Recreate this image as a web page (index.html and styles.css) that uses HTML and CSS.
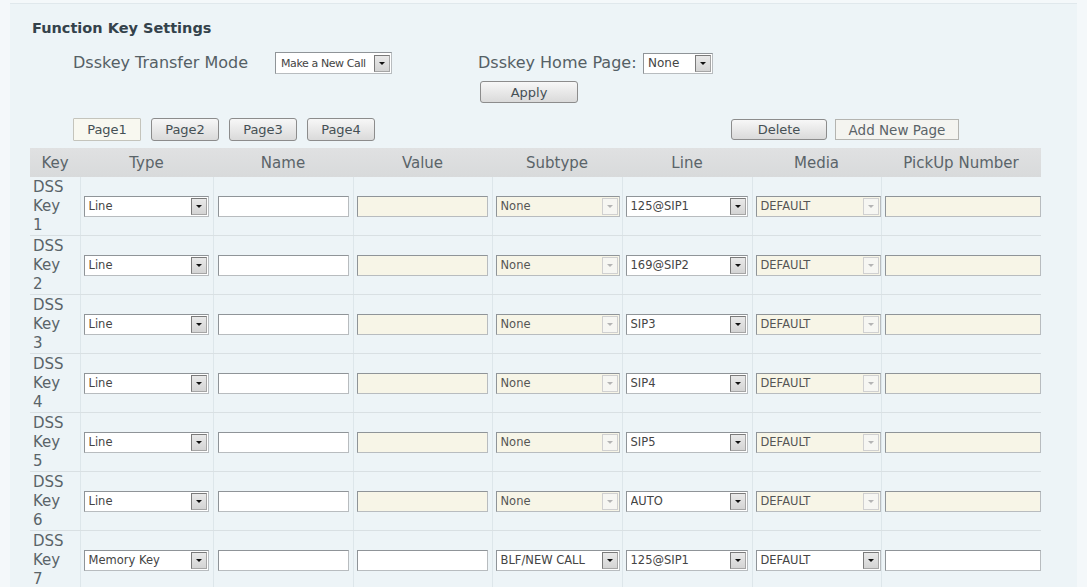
FILE: index.html
```html
<!DOCTYPE html>
<html lang="en">
<head>
    <meta charset="UTF-8">
    <meta name="viewport" content="width=device-width, initial-scale=1.0">
    <title>Function Key Settings</title>
    <link rel="stylesheet" href="styles.css">
</head>
<body>

    <div class="page">
        <h1 class="title">Function Key Settings</h1>

        <div class="settings">
            <label class="lbl-mode">Dsskey Transfer Mode</label>
            <div class="sel sel-mode">
                <select><option>Make a New Call</option><option>Blind Transfer</option></select>
                <span class="arr"></span>
            </div>
            <div class="home">
                <div class="home-row">
                    <label class="lbl-home">Dsskey Home Page:</label>
                    <div class="sel sel-home">
                        <select><option>None</option><option>Page1</option></select>
                        <span class="arr"></span>
                    </div>
                </div>
                <button class="btn btn-apply">Apply</button>
            </div>
        </div>

        <div class="toolbar">
            <div class="pages">
                <button class="btn btn-page current">Page1</button>
                <button class="btn btn-page">Page2</button>
                <button class="btn btn-page">Page3</button>
                <button class="btn btn-page">Page4</button>
            </div>
            <div class="page-actions">
                <button class="btn btn-delete">Delete</button>
                <button class="btn btn-add">Add New Page</button>
            </div>
        </div>

        <table class="keys">
            <colgroup>
                <col class="c-key"><col class="c-type"><col class="c-name"><col class="c-value">
                <col class="c-sub"><col class="c-line"><col class="c-media"><col class="c-pick">
            </colgroup>
            <thead>
                <tr>
                    <th>Key</th><th>Type</th><th>Name</th><th>Value</th>
                    <th>Subtype</th><th>Line</th><th>Media</th><th>PickUp Number</th>
                </tr>
            </thead>
            <tbody id="keyRows"></tbody>
        </table>
    </div>

    <script>
        const keys = [
            { type: "Line", line: "125@SIP1" },
            { type: "Line", line: "169@SIP2" },
            { type: "Line", line: "SIP3" },
            { type: "Line", line: "SIP4" },
            { type: "Line", line: "SIP5" },
            { type: "Line", line: "AUTO" },
            { type: "Memory Key", line: "125@SIP1", sub: "BLF/NEW CALL", open: true }
        ];

        function selectBox(cls, value, off) {
            return `<div class="sel ${cls}${off ? " off" : ""}">
                <select${off ? " disabled" : ""}><option>${value}</option></select>
                <span class="arr"></span>
            </div>`;
        }

        let rows = document.getElementById("keyRows");
        keys.forEach((k, i) => {
            let off = !k.open;
            let tr = document.createElement("tr");
            tr.innerHTML = `
                <td class="key">DSS<br>Key<br>${i + 1}</td>
                <td>${selectBox("sel-type", k.type, false)}</td>
                <td><input type="text" class="txt txt-name"></td>
                <td><input type="text" class="txt txt-value${off ? " off" : ""}"${off ? " disabled" : ""}></td>
                <td>${selectBox("sel-sub", k.sub || "None", off)}</td>
                <td>${selectBox("sel-line", k.line, false)}</td>
                <td>${selectBox("sel-media", "DEFAULT", off)}</td>
                <td><input type="text" class="txt txt-pick${off ? " off" : ""}"${off ? " disabled" : ""}></td>`;
            rows.appendChild(tr);
        });
    </script>

</body>
</html>
```

FILE: styles.css
```css
body {
    margin: 0;
    background-color: #f4f8fa;
    font-family: "DejaVu Sans", Verdana, sans-serif;
    color: #556065;
    overflow: hidden;
}
.page {
    margin: 3px 10px 0 10px;
    padding: 15px 0 0 20px;
    background-color: #edf4f7;
    border-top: 1px solid #e0e8ec;
    min-height: 600px;
}
.title {
    margin: 0 0 0 2px;
    font-size: 14.5px;
    line-height: 18px;
    font-weight: bold;
    color: #34424b;
}
.settings {
    display: flex;
    align-items: flex-start;
    margin: 15px 0 0 43px;
    font-size: 16px;
}
.lbl-mode {
    width: 202px;
    line-height: 22px;
}
.home {
    display: flex;
    flex-direction: column;
    margin-left: 86px;
}
.home-row {
    display: flex;
    align-items: center;
}
.lbl-home {
    width: 165px;
    line-height: 22px;
}

/* select boxes */
.sel {
    display: flex;
    align-items: center;
    box-sizing: border-box;
    height: 21px;
    border: 1px solid #9a9fa3;
    border-color: #8f9498 #b8bcbf #b8bcbf #8f9498;
    background-color: #fff;
}
.sel select {
    flex: 1;
    min-width: 0;
    height: 100%;
    padding: 0 0 0 4px;
    border: 0;
    background: transparent;
    -webkit-appearance: none;
    appearance: none;
    font-family: "DejaVu Sans", Verdana, sans-serif;
    font-size: 11.5px;
    color: #444;
    outline: none;
}
.sel select:disabled {
    color: #555;
    opacity: 1;
}
.arr {
    display: flex;
    align-items: center;
    justify-content: center;
    box-sizing: border-box;
    width: 16px;
    height: 17px;
    margin-right: 1px;
    border: 1px solid #8a8a8a;
    border-color: #7a7a7a #a5a5a5 #a5a5a5 #7a7a7a;
    background: linear-gradient(#e9e9e9, #d4d4d4);
}
.arr::after {
    content: "";
    border-left: 3px solid transparent;
    border-right: 3px solid transparent;
    border-top: 3px solid #111;
}
.sel.off {
    background-color: #f7f5e7;
}
.sel.off .arr {
    border-color: #d0d0d0;
    background: #f6f6f2;
}
.sel.off .arr::after {
    border-top-color: #b4b4b4;
}
.sel-mode {
    width: 117px;
    height: 22px;
}
.sel-mode select {
    font-size: 11px;
    letter-spacing: -0.4px;
    padding-left: 5px;
}
.sel-home {
    width: 70px;
}
.sel-home select {
    font-size: 12px;
}
.sel-type { width: 125px; }
.sel-sub { width: 124px; }
.sel-line { width: 122px; }
.sel-media { width: 125px; }

/* text inputs */
.txt {
    box-sizing: border-box;
    height: 21px;
    margin: 0;
    padding: 0 3px;
    border: 1px solid #9a9fa3;
    border-color: #8f9498 #b8bcbf #b8bcbf #8f9498;
    background-color: #fff;
    font-family: "DejaVu Sans", Verdana, sans-serif;
    font-size: 11.5px;
}
.txt.off {
    background-color: #f7f5e7;
}
.txt-name { width: 131px; margin-left: 1px; }
.txt-value { width: 131px; }
.txt-pick { width: 156px; }

/* buttons */
.btn {
    box-sizing: border-box;
    height: 22px;
    padding: 0;
    border: 1px solid #8c8c8c;
    border-radius: 3px;
    background: linear-gradient(#f7f7f7, #dadada);
    font-family: "DejaVu Sans", Verdana, sans-serif;
    font-size: 13px;
    color: #455055;
    cursor: pointer;
}
.btn:hover {
    background: linear-gradient(#ffffff, #e6e6e6);
}
.btn-apply {
    width: 98px;
    margin: 7px 0 0 2px;
}
.toolbar {
    display: flex;
    align-items: center;
    width: 1011px;
    margin-top: 15px;
}
.pages {
    display: flex;
    gap: 10px;
    margin-left: 43px;
}
.btn-page {
    width: 68px;
    height: 23px;
}
.btn-page.current {
    border-color: #c4c4bc;
    border-radius: 1px;
    background: #f8f8f0;
}
.page-actions {
    display: flex;
    gap: 8px;
    margin-left: auto;
    margin-right: 82px;
}
.btn-delete {
    width: 96px;
    height: 21px;
}
.btn-add {
    width: 124px;
    height: 21px;
    border-color: #b4b4b0;
    border-radius: 0;
    background: #f4f4f0;
    font-size: 13.5px;
    color: #5a6368;
}

/* key table */
.keys {
    width: 1011px;
    margin-top: 7px;
    border-collapse: collapse;
    table-layout: fixed;
}
.c-key { width: 50px; }
.c-type { width: 133px; }
.c-name { width: 140px; }
.c-value { width: 139px; }
.c-sub { width: 130px; }
.c-line { width: 130px; }
.c-media { width: 129px; }
.c-pick { width: 160px; }
.keys th {
    height: 29px;
    padding: 0;
    background: linear-gradient(#e0e1e2, #d8dadb);
    font-size: 15px;
    font-weight: normal;
    color: #5a6469;
    text-align: center;
}
.keys td {
    height: 58px;
    padding: 0 0 0 3px;
    border-bottom: 1px solid #d9e0e3;
    border-left: 1px solid #dde6ea;
    vertical-align: middle;
}
.keys td:first-child {
    border-left: 0;
}
.keys td.key {
    padding: 0 0 0 3px;
    font-size: 15px;
    line-height: 19px;
    color: #5a6469;
}
```
